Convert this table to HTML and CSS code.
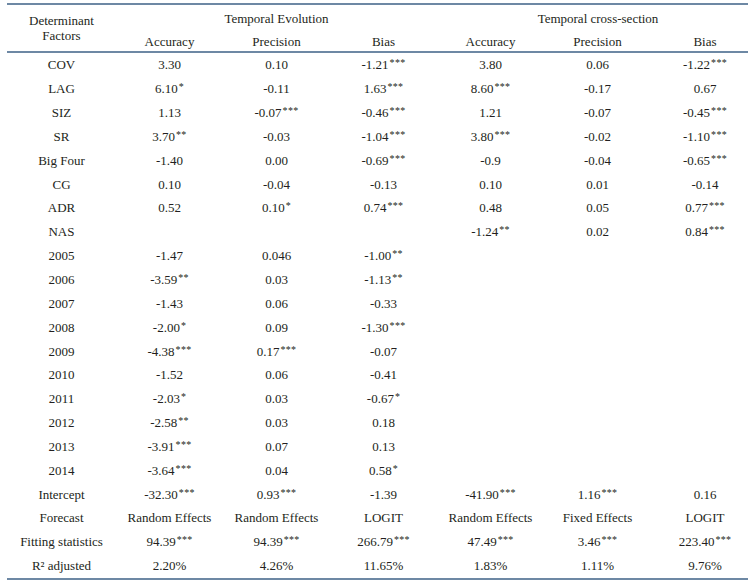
FILE: index.html
```html
<!DOCTYPE html>
<html>
<head>
<meta charset="utf-8">
<link rel="stylesheet" href="styles.css">
</head>
<body>
<div class="tbl">
  <div class="head">
    <div class="c lab hdlab">Determinant<br>Factors</div>
    <div class="c grp g1">Temporal Evolution</div>
    <div class="c grp g2">Temporal cross-section</div>
    <div class="c sub">Accuracy</div>
    <div class="c sub">Precision</div>
    <div class="c sub">Bias</div>
    <div class="c sub">Accuracy</div>
    <div class="c sub">Precision</div>
    <div class="c sub last">Bias</div>
  </div>
  <div class="body">
    <div class="c lab">COV</div><div class="c">3.30</div><div class="c">0.10</div><div class="c">-1.21<span class="s">***</span></div><div class="c">3.80</div><div class="c">0.06</div><div class="c last">-1.22<span class="s">***</span></div>
    <div class="c lab">LAG</div><div class="c">6.10<span class="s">*</span></div><div class="c">-0.11</div><div class="c">1.63<span class="s">***</span></div><div class="c">8.60<span class="s">***</span></div><div class="c">-0.17</div><div class="c last">0.67</div>
    <div class="c lab">SIZ</div><div class="c">1.13</div><div class="c">-0.07<span class="s">***</span></div><div class="c">-0.46<span class="s">***</span></div><div class="c">1.21</div><div class="c">-0.07</div><div class="c last">-0.45<span class="s">***</span></div>
    <div class="c lab">SR</div><div class="c">3.70<span class="s">**</span></div><div class="c">-0.03</div><div class="c">-1.04<span class="s">***</span></div><div class="c">3.80<span class="s">***</span></div><div class="c">-0.02</div><div class="c last">-1.10<span class="s">***</span></div>
    <div class="c lab">Big Four</div><div class="c">-1.40</div><div class="c">0.00</div><div class="c">-0.69<span class="s">***</span></div><div class="c">-0.9</div><div class="c">-0.04</div><div class="c last">-0.65<span class="s">***</span></div>
    <div class="c lab">CG</div><div class="c">0.10</div><div class="c">-0.04</div><div class="c">-0.13</div><div class="c">0.10</div><div class="c">0.01</div><div class="c last">-0.14</div>
    <div class="c lab">ADR</div><div class="c">0.52</div><div class="c">0.10<span class="s">*</span></div><div class="c">0.74<span class="s">***</span></div><div class="c">0.48</div><div class="c">0.05</div><div class="c last">0.77<span class="s">***</span></div>
    <div class="c lab">NAS</div><div class="c"></div><div class="c"></div><div class="c"></div><div class="c">-1.24<span class="s">**</span></div><div class="c">0.02</div><div class="c last">0.84<span class="s">***</span></div>
    <div class="c lab">2005</div><div class="c">-1.47</div><div class="c">0.046</div><div class="c">-1.00<span class="s">**</span></div><div class="c"></div><div class="c"></div><div class="c last"></div>
    <div class="c lab">2006</div><div class="c">-3.59<span class="s">**</span></div><div class="c">0.03</div><div class="c">-1.13<span class="s">**</span></div><div class="c"></div><div class="c"></div><div class="c last"></div>
    <div class="c lab">2007</div><div class="c">-1.43</div><div class="c">0.06</div><div class="c">-0.33</div><div class="c"></div><div class="c"></div><div class="c last"></div>
    <div class="c lab">2008</div><div class="c">-2.00<span class="s">*</span></div><div class="c">0.09</div><div class="c">-1.30<span class="s">***</span></div><div class="c"></div><div class="c"></div><div class="c last"></div>
    <div class="c lab">2009</div><div class="c">-4.38<span class="s">***</span></div><div class="c">0.17<span class="s">***</span></div><div class="c">-0.07</div><div class="c"></div><div class="c"></div><div class="c last"></div>
    <div class="c lab">2010</div><div class="c">-1.52</div><div class="c">0.06</div><div class="c">-0.41</div><div class="c"></div><div class="c"></div><div class="c last"></div>
    <div class="c lab">2011</div><div class="c">-2.03<span class="s">*</span></div><div class="c">0.03</div><div class="c">-0.67<span class="s">*</span></div><div class="c"></div><div class="c"></div><div class="c last"></div>
    <div class="c lab">2012</div><div class="c">-2.58<span class="s">**</span></div><div class="c">0.03</div><div class="c">0.18</div><div class="c"></div><div class="c"></div><div class="c last"></div>
    <div class="c lab">2013</div><div class="c">-3.91<span class="s">***</span></div><div class="c">0.07</div><div class="c">0.13</div><div class="c"></div><div class="c"></div><div class="c last"></div>
    <div class="c lab">2014</div><div class="c">-3.64<span class="s">***</span></div><div class="c">0.04</div><div class="c">0.58<span class="s">*</span></div><div class="c"></div><div class="c"></div><div class="c last"></div>
    <div class="c lab">Intercept</div><div class="c">-32.30<span class="s">***</span></div><div class="c">0.93<span class="s">***</span></div><div class="c">-1.39</div><div class="c">-41.90<span class="s">***</span></div><div class="c">1.16<span class="s">***</span></div><div class="c last">0.16</div>
    <div class="c lab">Forecast</div><div class="c">Random Effects</div><div class="c">Random Effects</div><div class="c">LOGIT</div><div class="c">Random Effects</div><div class="c">Fixed Effects</div><div class="c last">LOGIT</div>
    <div class="c lab">Fitting statistics</div><div class="c">94.39<span class="s">***</span></div><div class="c">94.39<span class="s">***</span></div><div class="c">266.79<span class="s">***</span></div><div class="c">47.49<span class="s">***</span></div><div class="c">3.46<span class="s">***</span></div><div class="c last">223.40<span class="s">***</span></div>
    <div class="c lab">R² adjusted</div><div class="c">2.20%</div><div class="c">4.26%</div><div class="c">11.65%</div><div class="c">1.83%</div><div class="c">1.11%</div><div class="c last">9.76%</div>
  </div>
</div>
</body>
</html>
```
FILE: styles.css
```css
html, body {
  margin: 0;
  padding: 0;
  background: #ffffff;
}
body {
  font-family: "Liberation Serif", "Times New Roman", serif;
  font-size: 13px;
  color: #231f20;
}
.tbl {
  margin: 3px 0 0 7px;
  width: 741px;
}
.head {
  display: grid;
  grid-template-columns: 109px repeat(5, 107px) 97px;
  grid-template-rows: 25px 21px;
  border-top: 2px solid #6d88a4;
  border-bottom: 2px solid #6d88a4;
}
.body {
  display: grid;
  grid-template-columns: 109px repeat(5, 107px) 97px;
  grid-auto-rows: 23.85px;
  border-bottom: 2px solid #6d88a4;
}
.c {
  display: flex;
  align-items: center;
  justify-content: center;
  text-align: center;
  white-space: nowrap;
  line-height: 15px;
}
.s {
  font-size: 10px;
  position: relative;
  top: -2px;
  letter-spacing: 0.3px;
  margin-left: 1px;
}
.last {
  padding-left: 11px;
}
.hdlab {
  grid-row: 1 / 3;
  grid-column: 1;
  padding-bottom: 1px;
}
.grp {
  padding-top: 2px;
}
.g1 {
  grid-column: 2 / 5;
  grid-row: 1;
}
.g2 {
  grid-column: 5 / 8;
  grid-row: 1;
  padding-left: 11px;
}
.sub {
  grid-row: 2;
  padding-top: 2px;
}
```
